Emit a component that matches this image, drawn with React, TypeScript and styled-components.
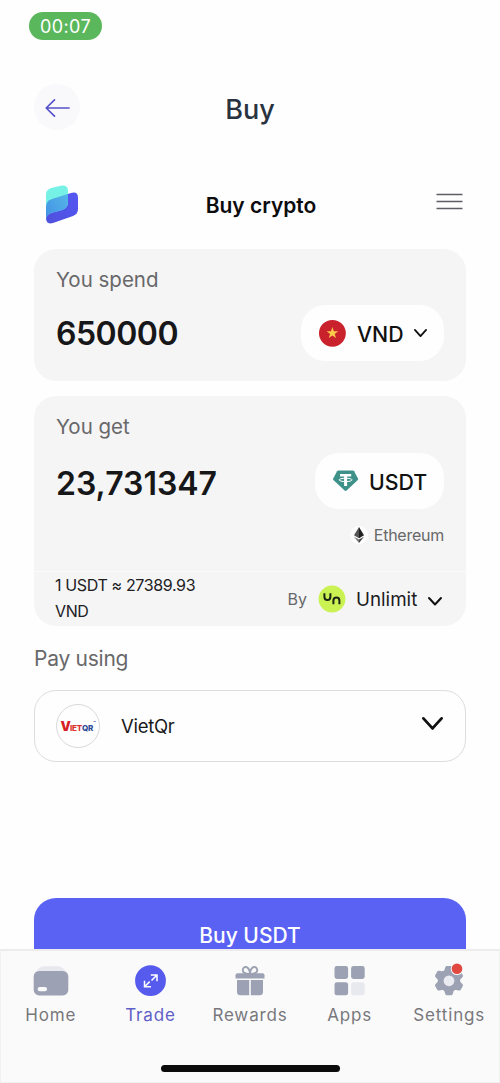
import React from 'react';
import styled, { createGlobalStyle } from 'styled-components';

const GlobalStyle = createGlobalStyle`
  * { box-sizing: border-box; }
  body { margin: 0; background: #fefefe; font-family: Inter, 'Liberation Sans', sans-serif; color: #111; }
  svg { display: block; flex: none; overflow: visible; }
`;

const Screen = styled.div`
  width: 500px;
  height: 1083px;
  display: flex;
  flex-direction: column;
  overflow: hidden;
  background: #fefefe;
`;

const StatusBar = styled.div`
  height: 84px;
  padding: 12px 0 0 29px;
  flex: none;
`;

const Clock = styled.div`
  width: 73px;
  height: 28px;
  border-radius: 14px;
  background: #5bb75c;
  color: #fff;
  font-size: 18px;
  line-height: 29px;
  letter-spacing: 0.4px;
  text-align: center;
`;

const Header = styled.header`
  height: 46px;
  padding: 0 34px;
  display: grid;
  grid-template-columns: 46px 1fr 46px;
  align-items: center;
  flex: none;
`;

const BackButton = styled.button`
  width: 46px;
  height: 46px;
  padding: 2px 0 0;
  border: 0;
  border-radius: 50%;
  background: #f9f9fb;
  display: flex;
  align-items: center;
  justify-content: center;
`;

const PageTitle = styled.h1`
  margin: 6px 0 0;
  text-align: center;
  font-size: 27px;
  line-height: 32px;
  font-weight: 500;
  color: #29333f;
`;

const Body = styled.main`
  flex: 1;
  min-height: 0;
  padding: 0 34px;
  display: flex;
  flex-direction: column;
  overflow: hidden;
`;

const WidgetBar = styled.div`
  height: 119px;
  padding: 55px 2px 0 10px;
  display: flex;
  justify-content: space-between;
  align-items: flex-start;
  flex: none;
`;

const WidgetTitle = styled.h2`
  margin: 7px 0 0 6px;
  font-size: 21px;
  line-height: 28px;
  font-weight: 600;
  color: #0c0c0e;
`;

const MenuIcon = styled.svg`
  margin: 8px 1px 0 0;
`;

const Card = styled.section<{ $height: number }>`
  height: ${p => p.$height}px;
  border-radius: 22px;
  background: #f5f5f5;
  display: flex;
  flex-direction: column;
  flex: none;
`;

const CardBody = styled.div`
  padding: 17px 22px 0;
`;

const Label = styled.div<{ $size?: number; $spacing?: number }>`
  font-size: ${p => p.$size ?? 20.5}px;
  line-height: 28px;
  letter-spacing: ${p => p.$spacing ?? 0}px;
  color: #68686a;
`;

const AmountRow = styled.div<{ $top: number }>`
  margin-top: ${p => p.$top}px;
  height: 56px;
  display: flex;
  justify-content: space-between;
  align-items: center;
`;

const Amount = styled.div<{ $spacing: number; $drop: number }>`
  padding-top: ${p => p.$drop}px;
  font-size: 32px;
  line-height: 40px;
  font-weight: 600;
  letter-spacing: ${p => p.$spacing}px;
  color: #171719;
`;

const CurrencyPill = styled.div<{ $width: number }>`
  width: ${p => p.$width}px;
  height: 56px;
  padding: 0 17px;
  border-radius: 24px;
  background: #fefefe;
  display: flex;
  align-items: center;
`;

const CurrencyCode = styled.span<{ $left: number }>`
  margin-left: ${p => p.$left}px;
  padding-top: 1px;
  flex: 1;
  font-size: 21.3px;
  font-weight: 500;
  line-height: 28px;
  color: #111;
`;

const Network = styled.div`
  margin-top: 14px;
  height: 24px;
  display: flex;
  justify-content: flex-end;
  align-items: center;
  gap: 5px;
  font-size: 16px;
  letter-spacing: -0.25px;
  color: #68686a;
`;

const ProviderRow = styled.div`
  margin-top: auto;
  height: 55px;
  padding: 0 24px 0 21px;
  border-top: 1px solid #fafafa;
  display: flex;
  justify-content: space-between;
`;

const Rate = styled.div`
  width: 150px;
  font-size: 16px;
  line-height: 26px;
  letter-spacing: -0.36px;
  color: #202022;
`;

const Provider = styled.div`
  height: 54px;
  display: flex;
  align-items: center;
`;

const ByText = styled.span`
  font-size: 16px;
  color: #68686a;
  margin-right: 11px;
`;

const ProviderName = styled.span`
  width: 62px;
  margin: 0 10px;
  font-size: 18.8px;
  color: #1b1b1d;
`;

const ProviderArrow = styled.span`
  padding-top: 4px;
`;

const Gap = styled.div<{ $height: number }>`
  height: ${p => p.$height}px;
  flex: none;
`;

const PaymentMethod = styled.div`
  margin-top: 17px;
  height: 72px;
  padding: 0 22px 0 21px;
  border: 1.5px solid #dddddf;
  border-radius: 22px;
  display: flex;
  align-items: center;
  flex: none;
`;

const MethodName = styled.span`
  margin-left: 21px;
  flex: 1;
  font-size: 18.5px;
  letter-spacing: -0.3px;
  color: #19191b;
`;

const MethodArrow = styled.span`
  padding-bottom: 4px;
`;

const BrandBadge = styled.div`
  width: 44px;
  height: 44px;
  border: 1px solid #d9d9dd;
  border-radius: 50%;
  display: flex;
  align-items: baseline;
  justify-content: center;
  line-height: 42px;
  font-size: 8px;
  font-weight: 800;
  letter-spacing: -0.2px;
  color: #d9322f;
`;

const BrandInitial = styled.span`
  font-size: 13px;
  font-weight: 900;
  letter-spacing: -0.8px;
  color: #d61f26;
`;

const BrandSuffix = styled.span`
  color: #2d4c96;
`;

const BrandMark = styled.span`
  font-size: 4px;
  align-self: flex-start;
  line-height: 36px;
  color: #2d4c96;
`;

const BuyButton = styled.button`
  margin-top: 136px;
  height: 75px;
  border: 0;
  padding: 0;
  border-radius: 22px;
  background: #5a62f4;
  color: #fff;
  font-family: inherit;
  font-size: 21px;
  font-weight: 500;
  line-height: 75px;
  flex: none;
`;

const TabBar = styled.nav`
  position: relative;
  height: 134px;
  padding-top: 14px;
  border: 1px solid #f0f0f2;
  border-top: 2px solid #ececee;
  background: #fafafa;
  display: grid;
  grid-template-columns: repeat(5, 1fr);
  align-items: start;
  flex: none;
`;

const TabItem = styled.div<{ $active?: boolean }>`
  display: flex;
  flex-direction: column;
  align-items: center;
  gap: 5px;
  font-size: 17px;
  line-height: 26px;
  letter-spacing: 0.85px;
  color: ${p => (p.$active ? '#605fc8' : '#78787c')};
`;

const HomeIndicator = styled.div`
  position: absolute;
  left: 160px;
  bottom: 10px;
  width: 179px;
  height: 7px;
  border-radius: 4px;
  background: #0b0b0b;
`;

const Chevron = ({ width, height, stroke }: { width: number; height: number; stroke: number }) => (
  <svg width={width} height={height} viewBox={`0 0 ${width} ${height}`} fill="none">
    <path d={`M${stroke / 2} ${stroke / 2}L${width / 2} ${height - stroke * 0.75}L${width - stroke / 2} ${stroke / 2}`} stroke="#111" strokeWidth={stroke} strokeLinecap="round" strokeLinejoin="round" />
  </svg>
);

const WalletLogo = () => (
  <svg width="36" height="40" viewBox="0 0 36 40">
    <defs>
      <linearGradient id="wallet-deep" x1="0" y1="1" x2="1" y2="0"><stop stopColor="#5050dd" /><stop offset="1" stopColor="#5358f3" /></linearGradient>
      <linearGradient id="wallet-over" x1="0" y1="1" x2="1" y2="0"><stop stopColor="#4293e4" /><stop offset="1" stopColor="#58b9e8" /></linearGradient>
      <clipPath id="wallet-clip"><path d="M8 14L27 8Q34 6 34 13V24Q34 29 29 31L9 38Q2 40 2 33V22Q2 16 8 14Z" /></clipPath>
    </defs>
    <path d="M8 14L27 8Q34 6 34 13V24Q34 29 29 31L9 38Q2 40 2 33V22Q2 16 8 14Z" fill="url(#wallet-deep)" />
    <path d="M7 3L18 .5Q24 0 24 6V17Q24 23 18 25L7 28Q2 30 2 34V9Q2 5 7 3Z" fill="#76f1e6" />
    <path d="M7 3L18 .5Q24 0 24 6V17Q24 23 18 25L7 28Q2 30 2 34V9Q2 5 7 3Z" fill="url(#wallet-over)" clipPath="url(#wallet-clip)" />
  </svg>
);

const FlagIcon = () => (
  <svg width="28" height="28" viewBox="0 0 28 28">
    <circle cx="14.4" cy="14.3" r="13.4" fill="#c9222d" />
    <path d="M14.4 8.1L15.8 12.3H20.2L16.7 14.9L18 19.1L14.4 16.5L10.8 19.1L12.1 14.9L8.6 12.3H13Z" fill="#fbc94b" />
  </svg>
);

const TetherIcon = () => (
  <svg width="26" height="22" viewBox="0 0 26 22">
    <path d="M6.6 .5H20.6Q21.6 .5 22.1 1.3L26 8.4Q26.4 9.3 25.8 10L14.6 20.6Q13.6 21.5 12.6 20.6L1.4 10Q.8 9.3 1.2 8.4L5.1 1.3Q5.6 .5 6.6 .5Z" fill="#3e9188" />
    <path d="M8 3.9H19.2V6.6H15.1V16H12.1V6.6H8Z" fill="#fff" />
    <ellipse cx="13.6" cy="9.9" rx="6.5" ry="1.7" fill="none" stroke="#fff" strokeWidth="1" />
  </svg>
);

const EthereumIcon = () => (
  <svg width="20" height="20" viewBox="0 0 20 20">
    <circle cx="10" cy="10" r="9.7" fill="#fdfdfd" stroke="#f0f0f2" strokeWidth=".6" />
    <path d="M10 2L5 10.3L10 13.2Z" fill="#555" />
    <path d="M10 2L15 10.3L10 13.2Z" fill="#222" />
    <path d="M5 11.7L10 18V14.6Z" fill="#777" />
    <path d="M15 11.7L10 18V14.6Z" fill="#444" />
  </svg>
);

const UnlimitIcon = () => (
  <svg width="28" height="28" viewBox="0 0 28 28" fill="none">
    <circle cx="14" cy="14" r="13.4" fill="#caf252" />
    <path d="M6.4 8.2V11.8Q6.4 15 9.4 15Q12.4 15 12.4 11.8V8.2M15.4 19.3V15.8Q15.4 12.6 18.4 12.6Q21.4 12.6 21.4 15.8V19.3" stroke="#1b2417" strokeWidth="2" />
  </svg>
);

const HomeIcon = () => (
  <svg width="36" height="32" viewBox="0 0 36 32">
    <path d="M3 7Q6 1.2 12 1.2H24Q30 1.2 33 7Z" fill="#e7e9ef" />
    <rect x=".7" y="6" width="34.6" height="24.4" rx="5.5" fill="#9ca1b3" />
    <rect x="4.7" y="22" width="9.3" height="4.3" rx="2" fill="#fafafa" />
  </svg>
);

const TradeIcon = () => (
  <svg width="32" height="32" viewBox="0 0 32 32" fill="none">
    <circle cx="16.5" cy="15.7" r="15.4" fill="#565bed" />
    <path d="M16.8 10H23V16.2M22.5 10.5L17.5 15.5M10.5 15.8V21.8H17M11 21.3L15.7 16.6" stroke="#fff" strokeWidth="1.5" />
  </svg>
);

const GiftIcon = () => (
  <svg width="32" height="32" viewBox="0 0 32 32">
    <path d="M16 9C11 9 8.4 7.4 8.8 4.6C9.4 .8 14.6 .4 16 7.8ZM16 9C21 9 23.6 7.4 23.2 4.6C22.6 .8 17.4 .4 16 7.8Z" fill="none" stroke="#9ca1b3" strokeWidth="1.9" />
    <path d="M3.5 8.3H28.5Q30.5 8.3 30.5 10.3V13.4H1.5V10.3Q1.5 8.3 3.5 8.3Z" fill="#9ca1b3" />
    <path d="M3 15.1H15.2V30.3H6.5Q3 30.3 3 26.8ZM16.8 15.1H29V26.8Q29 30.3 25.5 30.3H16.8Z" fill="#9ca1b3" />
  </svg>
);

const AppsIcon = () => (
  <svg width="32" height="32" viewBox="0 0 32 32" fill="#9ca1b3">
    <rect x=".5" y="1" width="13.6" height="13" rx="2.4" />
    <rect x="17.1" y="1" width="13.6" height="13" rx="2.4" />
    <rect x=".5" y="17.3" width="13.6" height="13" rx="2.4" />
    <rect x="17.1" y="17.3" width="13.6" height="13" rx="2.4" fill="#e7e9ef" />
  </svg>
);

const SettingsIcon = () => (
  <svg width="32" height="32" viewBox="0 0 32 32">
    <g fill="#9ca1b3">
      <circle cx="16" cy="15.6" r="11.2" />
      {[0, 60, 120, 180, 240, 300].map(angle => (
        <path key={angle} d="M10.8 7L12.3 2.3Q12.6 .9 14 .9H18Q19.4 .9 19.7 2.3L21.2 7Z" transform={`rotate(${angle} 16 15.6)`} />
      ))}
    </g>
    <circle cx="16" cy="15.8" r="5.4" fill="#e9ebf1" />
    <circle cx="24" cy="3.8" r="6.3" fill="#fafafa" />
    <circle cx="24" cy="3.8" r="5.3" fill="#e1483f" />
  </svg>
);

export default function App() {
  return (
    <Screen>
      <GlobalStyle />
      <StatusBar><Clock>00:07</Clock></StatusBar>
      <Header>
        <BackButton aria-label="Back">
          <svg width="25" height="18" viewBox="0 0 25 18" fill="none">
            <path d="M24 9H1.5M9.5 .9L1.2 9L9.5 17.1" stroke="#5752c9" strokeWidth="1.7" strokeLinecap="round" strokeLinejoin="round" />
          </svg>
        </BackButton>
        <PageTitle>Buy</PageTitle>
      </Header>
      <Body>
        <WidgetBar>
          <WalletLogo />
          <WidgetTitle>Buy crypto</WidgetTitle>
          <MenuIcon width="27" height="18" viewBox="0 0 27 18">
            <path d="M.5 1.5H26.5M.5 8.5H26.5M.5 15.5H26.5" stroke="#5e5e66" strokeWidth="1.6" />
          </MenuIcon>
        </WidgetBar>
        <Card $height={132}>
          <CardBody>
            <Label>You spend</Label>
            <AmountRow $top={11}>
              <Amount $spacing={-0.5} $drop={2}>650000</Amount>
              <CurrencyPill $width={143}>
                <FlagIcon />
                <CurrencyCode $left={11}>VND</CurrencyCode>
                <Chevron width={13} height={8.5} stroke={1.8} />
              </CurrencyPill>
            </AmountRow>
          </CardBody>
        </Card>
        <Gap $height={15} />
        <Card $height={230}>
          <CardBody>
            <Label>You get</Label>
            <AmountRow $top={12}>
              <Amount $spacing={0} $drop={6}>23,731347</Amount>
              <CurrencyPill $width={129}>
                <TetherIcon />
                <CurrencyCode $left={11}>USDT</CurrencyCode>
              </CurrencyPill>
            </AmountRow>
            <Network><EthereumIcon />Ethereum</Network>
          </CardBody>
          <ProviderRow>
            <Rate>1 USDT ≈ 27389.93 VND</Rate>
            <Provider>
              <ByText>By</ByText>
              <UnlimitIcon />
              <ProviderName>Unlimit</ProviderName>
              <ProviderArrow><Chevron width={14} height={9} stroke={2} /></ProviderArrow>
            </Provider>
          </ProviderRow>
        </Card>
        <Gap $height={19} />
        <Label $size={21} $spacing={-0.25}>Pay using</Label>
        <PaymentMethod>
          <BrandBadge><BrandInitial>V</BrandInitial>IET<BrandSuffix>QR</BrandSuffix><BrandMark>™</BrandMark></BrandBadge>
          <MethodName>VietQr</MethodName>
          <MethodArrow><Chevron width={21} height={13.5} stroke={2.8} /></MethodArrow>
        </PaymentMethod>
        <BuyButton>Buy USDT</BuyButton>
      </Body>
      <TabBar>
        <TabItem><HomeIcon />Home</TabItem>
        <TabItem $active><TradeIcon />Trade</TabItem>
        <TabItem><GiftIcon />Rewards</TabItem>
        <TabItem><AppsIcon />Apps</TabItem>
        <TabItem><SettingsIcon />Settings</TabItem>
        <HomeIndicator />
      </TabBar>
    </Screen>
  );
}
